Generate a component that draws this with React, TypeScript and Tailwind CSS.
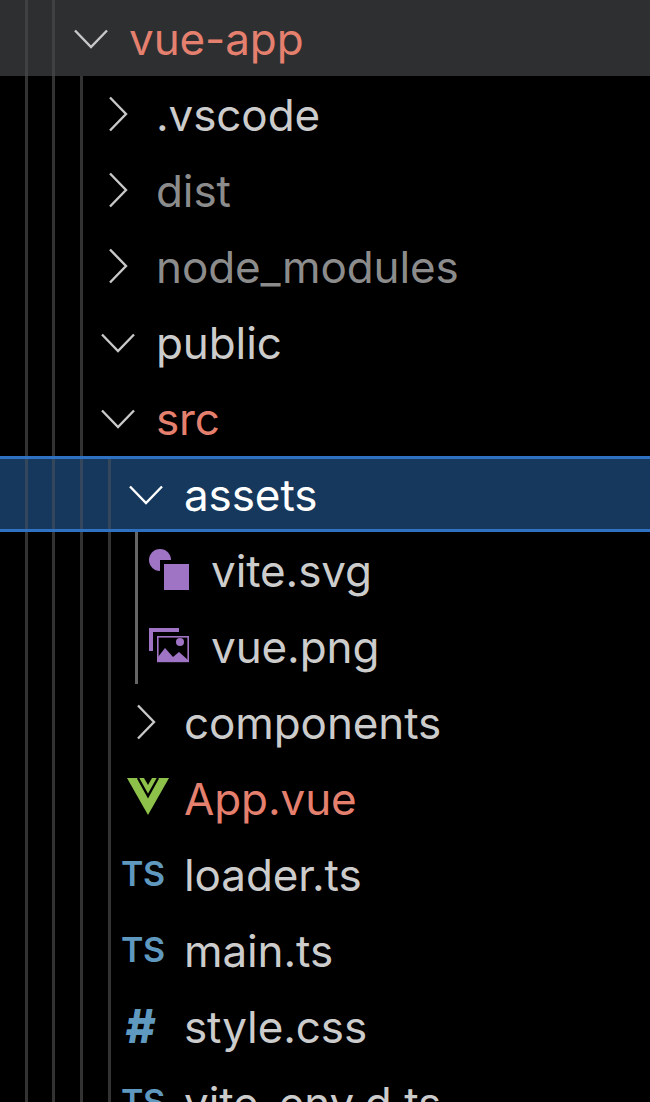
const guideClass = {
  a: "left-[25px]",
  b: "left-[52px]",
  c: "left-[80px]",
  d: "left-[108px]",
  e: "left-[135px]",
};

type Guide = keyof typeof guideClass;

const Guides = ({ items, tone }: { items: Guide[]; tone: string }) => (
  <>
    {items.map((g) => (
      <span
        key={g}
        className={`absolute top-0 bottom-0 w-[3px] ${guideClass[g]} ${g === "e" ? "bg-[#666666]" : tone}`}
      />
    ))}
  </>
);

const ChevronDown = ({ white }: { white?: boolean }) => (
  <svg width="44" height="44" viewBox="0 0 44 44" fill="none" className="overflow-visible">
    <path
      d="M7 14.5 L23 31 L39 14.5"
      stroke={white ? "#ffffff" : "#c8c8c8"}
      strokeWidth="2.4"
    />
  </svg>
);

const ChevronRight = () => (
  <svg width="44" height="44" viewBox="0 0 44 44" fill="none" className="overflow-visible">
    <path d="M15 5.5 L31 22 L15 38.5" stroke="#c8c8c8" strokeWidth="2.4" />
  </svg>
);

const ViteIcon = () => (
  <svg width="44" height="44" viewBox="0 0 44 44" className="overflow-visible">
    <circle cx="10" cy="12" r="11" fill="#a074c4" />
    <rect x="10" y="12" width="34" height="32" fill="#000000" />
    <rect x="14" y="16" width="25" height="26" fill="#a074c4" />
  </svg>
);

const ImageIcon = () => (
  <svg width="44" height="44" viewBox="0 0 44 44" className="overflow-visible">
    <path d="M-1 4 H29 V8 H3 V27 H-1 Z" fill="#a074c4" />
    <rect x="7.8" y="12.8" width="30.4" height="24.6" fill="none" stroke="#a074c4" strokeWidth="1.6" />
    <path d="M8 38 V33 L15 24 L23 33 L29 28 L38 36 V38 Z" fill="#a074c4" />
    <circle cx="30" cy="18" r="4" fill="#a074c4" />
  </svg>
);

const VueIcon = () => (
  <svg width="44" height="44" viewBox="0 0 44 44" className="overflow-visible">
    <path d="M4 2 H46 L25 39 Z" fill="#8dc149" />
    <path d="M15 2 L25 20 L35 2" fill="none" stroke="#000000" strokeWidth="2.4" />
    <path d="M21 2 H29 L25 9 Z" fill="#000000" />
  </svg>
);

const TsIcon = () => (
  <span className="ml-[-2px] font-['Inter',sans-serif] text-[34px] leading-none font-semibold text-[#5f99bf] tracking-[-0.5px]">
    TS
  </span>
);

const HashIcon = () => (
  <span className="pl-[2px] font-['Inter',sans-serif] text-[46px] leading-none font-extrabold italic text-[#5f99bf]">
    #
  </span>
);

const Row = ({
  pad,
  icon,
  label,
  color = "text-[#cccccc]",
  guides,
  tone = "bg-[#333333]",
  rowClass = "",
}: {
  pad: string;
  icon: React.ReactNode;
  label: string;
  color?: string;
  guides: Guide[];
  tone?: string;
  rowClass?: string;
}) => (
  <div className={`relative flex h-[76px] shrink-0 items-center ${pad} ${rowClass}`}>
    <Guides items={guides} tone={tone} />
    <div className="relative mr-[17px] flex h-[44px] w-[44px] items-center">{icon}</div>
    <span className={`relative mt-[2px] text-[44px] leading-none tracking-[-0.1px] whitespace-nowrap ${color}`}>{label}</span>
  </div>
);

export default function App() {
  const coral = "text-[#e5806f]";
  const dim = "text-[#8c8c8c]";
  const base: Guide[] = ["a", "b", "c"];
  const inner: Guide[] = ["a", "b", "c", "d"];
  return (
    <div className="flex h-[1102px] w-[650px] flex-col overflow-hidden bg-black font-['Inter',sans-serif]">
      <Row
        pad="pl-[68px]"
        icon={<ChevronDown />}
        label="vue-app"
        color={coral}
        guides={["a", "b"]}
        tone="bg-[#404143]"
        rowClass="bg-[#2e2f31]"
      />
      <Row pad="pl-[95px]" icon={<ChevronRight />} label=".vscode" guides={base} />
      <Row pad="pl-[95px]" icon={<ChevronRight />} label="dist" color={dim} guides={base} />
      <Row pad="pl-[95px]" icon={<ChevronRight />} label="node_modules" color={dim} guides={base} />
      <Row pad="pl-[95px]" icon={<ChevronDown />} label="public" guides={base} />
      <Row pad="pl-[95px]" icon={<ChevronDown />} label="src" color={coral} guides={base} />
      <Row
        pad="pl-[123px]"
        icon={<ChevronDown white />}
        label="assets"
        color="text-white"
        guides={inner}
        tone="bg-[#34475c]"
        rowClass="bg-[#16385c] border-y-[3px] border-[#2f72c4]"
      />
      <Row pad="pl-[150px]" icon={<ViteIcon />} label="vite.svg" guides={[...inner, "e"]} />
      <Row pad="pl-[150px]" icon={<ImageIcon />} label="vue.png" guides={[...inner, "e"]} />
      <Row pad="pl-[123px]" icon={<ChevronRight />} label="components" guides={inner} />
      <Row pad="pl-[123px]" icon={<VueIcon />} label="App.vue" color={coral} guides={inner} />
      <Row pad="pl-[123px]" icon={<TsIcon />} label="loader.ts" guides={inner} />
      <Row pad="pl-[123px]" icon={<TsIcon />} label="main.ts" guides={inner} />
      <Row pad="pl-[123px]" icon={<HashIcon />} label="style.css" guides={inner} />
      <Row pad="pl-[123px]" icon={<TsIcon />} label="vite-env.d.ts" guides={inner} />
    </div>
  );
}
